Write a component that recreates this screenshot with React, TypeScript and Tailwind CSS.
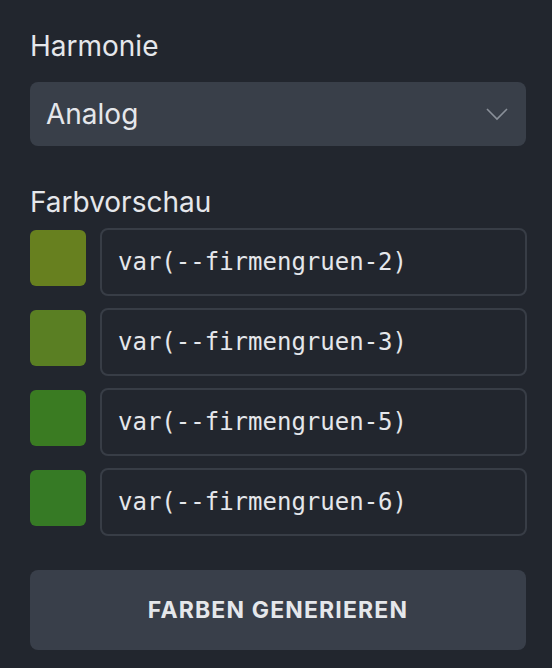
import React from "react";

const swatches = [
  { color: "#67801f", value: "var(--firmengruen-2)" },
  { color: "#5a7f23", value: "var(--firmengruen-3)" },
  { color: "#3a7b22", value: "var(--firmengruen-5)" },
  { color: "#367a25", value: "var(--firmengruen-6)" },
];

export default function App() {
  return (
    <div className="w-[552px] h-[668px] bg-[#22262e] pl-[30px] pr-[25px] pt-[29px] font-['Inter',sans-serif] text-[#e5e7eb]">
      <label className="block text-[28px] leading-[34px]">Harmonie</label>
      <div className="mt-[19px] mr-[1px] h-[64px] rounded-lg bg-[#393f49] flex items-center justify-between pl-[16px] pr-[18px]">
        <span className="text-[28px]">Analog</span>
        <svg width="22" height="14" viewBox="0 0 22 14" className="text-[#8a9099]">
          <polyline points="1,2 11,12 21,2" fill="none" stroke="currentColor" strokeWidth="1.6" />
        </svg>
      </div>

      <label className="block mt-[39px] text-[28px] leading-[34px]">Farbvorschau</label>
      <div className="mt-[9px] flex flex-col gap-[12px]">
        {swatches.map((s) => (
          <div key={s.value} className="flex items-start gap-[14px]">
            <div
              className="mt-[2px] w-[56px] h-[56px] rounded-md shrink-0"
              style={{ backgroundColor: s.color }}
            />
            <div className="flex-1 h-[68px] rounded-lg border-2 border-[#383d46] flex items-center pl-[16px] font-['DejaVu_Sans_Mono',monospace] text-[24px] text-[#e5e7eb]">
              {s.value}
            </div>
          </div>
        ))}
      </div>

      <button className="mt-[34px] mr-[1px] w-[496px] h-[80px] rounded-lg bg-[#393f4a] flex items-center justify-center text-[23px] font-bold tracking-[0.05em] text-[#e5e7eb]">
        FARBEN GENERIEREN
      </button>
    </div>
  );
}
